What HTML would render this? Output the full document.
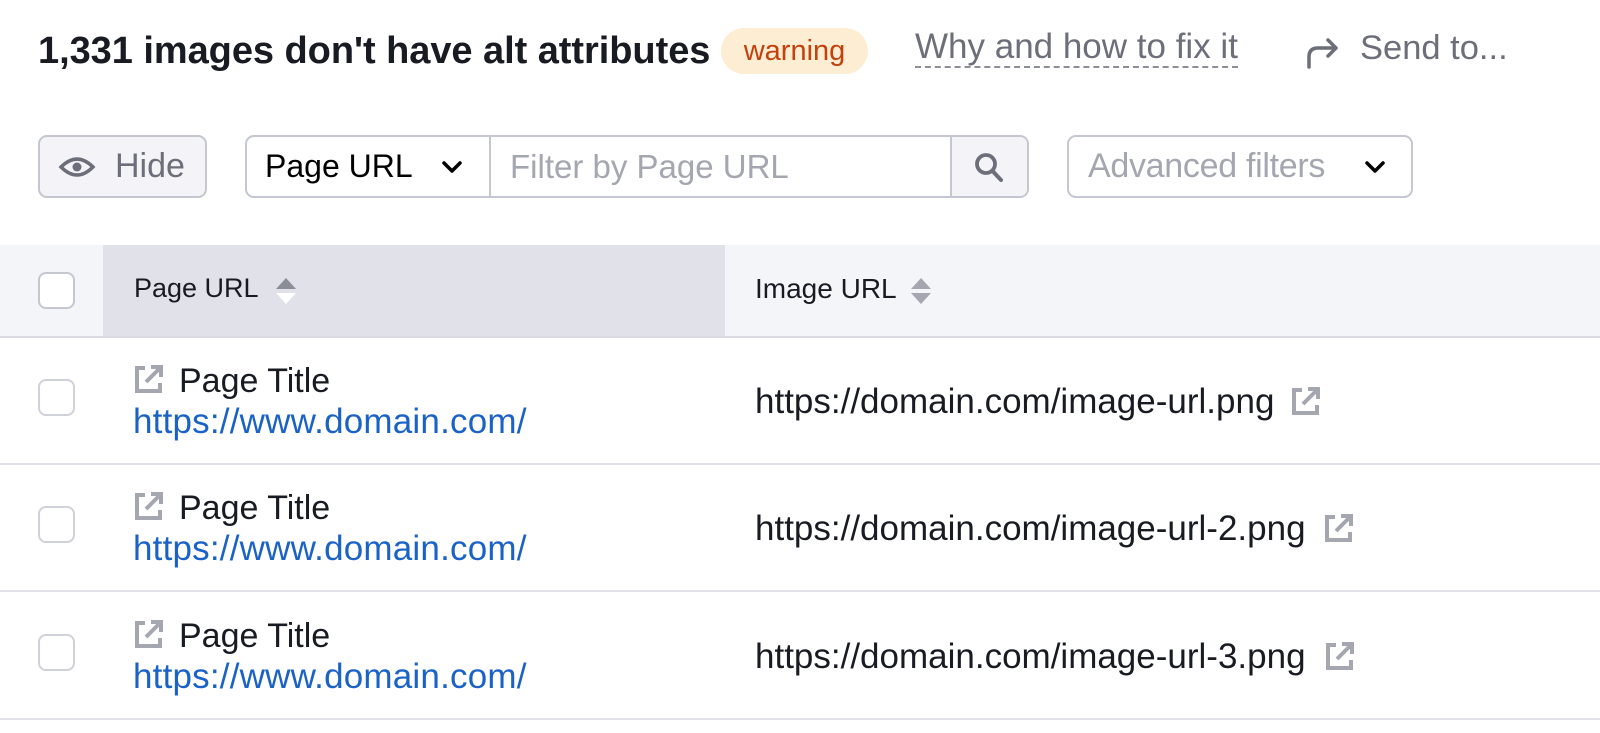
<!DOCTYPE html>
<html><head><meta charset="utf-8"><style>
*{box-sizing:border-box;margin:0;padding:0}
body{width:1600px;height:733px;background:#fff;font-family:"Liberation Sans",Arial,sans-serif;position:relative;overflow:hidden;color:#000}
.a{position:absolute;white-space:nowrap}
.btn{position:absolute;border:2px solid #c4c7cf;border-radius:9px}
.ext{position:absolute;width:34px;height:34px}
.pt{font-size:34px;color:#191b23}
.pu{font-size:35px;color:#1a62c6;letter-spacing:0.2px}
.iu{font-size:35px;color:#191b23}
</style></head><body>
<div class="a" style="left:38px;top:30px;font-size:38px;font-weight:bold;color:#191b23;letter-spacing:-0.05px">1,331 images don't have alt attributes</div>
<div class="a" style="left:721px;top:28px;width:147px;height:46px;border-radius:23px;background:#fdedd3;color:#c2410c;font-size:29px;line-height:46px;text-align:center">warning</div>
<div class="a" style="left:915px;top:28px;font-size:35px;color:#6c6e79;border-bottom:2px dashed #8b8d97;line-height:38px">Why and how to fix it</div>
<svg class="a" style="left:1303px;top:32px" width="40" height="40" viewBox="0 0 40 40"><path d="M6 35 V25 Q6 16 15 16 H33 M25 8 L33 16 L25 24" fill="none" stroke="#6c6e79" stroke-width="3.5" stroke-linecap="round" stroke-linejoin="round"/></svg>
<div class="a" style="left:1360px;top:29px;font-size:34.5px;color:#6c6e79">Send to...</div>

<div class="btn" style="left:38px;top:135px;width:169px;height:63px;background:#f4f4f8"></div>
<svg class="a" style="left:58px;top:150px" width="38" height="34" viewBox="0 0 38 34"><path d="M3 17 Q19 1 35 17 Q19 33 3 17Z" fill="none" stroke="#6c6e79" stroke-width="3.5"/><circle cx="19" cy="17" r="4.5" fill="#6c6e79"/></svg>
<div class="a" style="left:115px;top:147px;font-size:34px;color:#6c6e79">Hide</div>

<div class="btn" style="left:245px;top:135px;width:784px;height:63px"></div>
<div class="a" style="left:489px;top:137px;width:2px;height:59px;background:#c4c7cf"></div>
<div class="a" style="left:950px;top:137px;width:77px;height:59px;background:#f4f4f8;border-left:2px solid #c4c7cf;border-radius:0 7px 7px 0"></div>
<div class="a" style="left:265px;top:148px;font-size:32px;color:#000">Page URL</div>
<svg class="a" style="left:440px;top:158px" width="24" height="18" viewBox="0 0 24 18"><path d="M4 5 L12 13 L20 5" fill="none" stroke="#000" stroke-width="3.5" stroke-linecap="round" stroke-linejoin="round"/></svg>
<div class="a" style="left:510px;top:148px;font-size:33px;color:#a4a6b0">Filter by Page URL</div>
<svg class="a" style="left:972px;top:150px" width="36" height="36" viewBox="0 0 36 36"><circle cx="14" cy="14" r="9" fill="none" stroke="#6c6e79" stroke-width="3.8"/><path d="M20.5 21 L29 30" stroke="#6c6e79" stroke-width="4" stroke-linecap="round"/></svg>

<div class="btn" style="left:1067px;top:135px;width:346px;height:63px"></div>
<div class="a" style="left:1088px;top:147px;font-size:34px;color:#a4a6b0;letter-spacing:-0.3px">Advanced filters</div>
<svg class="a" style="left:1363px;top:158px" width="24" height="18" viewBox="0 0 24 18"><path d="M4 5 L12 13 L20 5" fill="none" stroke="#000" stroke-width="3.5" stroke-linecap="round" stroke-linejoin="round"/></svg>

<div class="a" style="left:0;top:245px;width:1600px;height:93px;background:#f4f5f9"></div>
<div class="a" style="left:103px;top:245px;width:622px;height:93px;background:#e0e1e9"></div>
<div class="a" style="left:0;top:336px;width:1600px;height:2px;background:#d9dae2"></div>
<div class="a" style="left:38px;top:272px;width:37px;height:37px;border:2px solid #c4c7cf;border-radius:8px;background:#fff"></div>
<div class="a" style="left:134px;top:273px;font-size:27px;color:#191b23">Page URL</div>
<svg class="a" style="left:274px;top:276px" width="24" height="30" viewBox="0 0 24 30"><path d="M2 13 L12 2 L22 13Z" fill="#8b8d97"/><path d="M2 17 L12 28 L22 17Z" fill="#fff"/></svg>
<div class="a" style="left:755px;top:273px;font-size:28px;color:#191b23">Image URL</div>
<svg class="a" style="left:909px;top:276px" width="24" height="30" viewBox="0 0 24 30"><path d="M2 13 L12 2 L22 13Z" fill="#a4a6b0"/><path d="M2 17 L12 28 L22 17Z" fill="#a4a6b0"/></svg>

<div class="a" style="left:0;top:463px;width:1600px;height:2px;background:#e0e1e9"></div>
<div class="a" style="left:0;top:590px;width:1600px;height:2px;background:#e0e1e9"></div>
<div class="a" style="left:0;top:718px;width:1600px;height:2px;background:#e0e1e9"></div>

<!-- row 1 -->
<div class="a" style="left:38px;top:379px;width:37px;height:37px;border:2px solid #d0d2d9;border-radius:8px"></div>
<svg class="ext" style="left:132px;top:362px" viewBox="0 0 34 34"><path d="M13 6 H5 V29 H28 V21" fill="none" stroke="#a4a6b0" stroke-width="4"/><path d="M14 20 L28 6 M19 5 H29 V15" fill="none" stroke="#a4a6b0" stroke-width="4"/></svg>
<div class="a pt" style="left:179px;top:362px">Page Title</div>
<div class="a pu" style="left:133px;top:402px">https://www.domain.com/</div>
<div class="a iu" style="left:755px;top:382px">https://domain.com/image-url.png</div>
<svg class="ext" style="left:1289px;top:384px" viewBox="0 0 34 34"><path d="M13 6 H5 V29 H28 V21" fill="none" stroke="#a4a6b0" stroke-width="4"/><path d="M14 20 L28 6 M19 5 H29 V15" fill="none" stroke="#a4a6b0" stroke-width="4"/></svg>

<!-- row 2 -->
<div class="a" style="left:38px;top:506px;width:37px;height:37px;border:2px solid #d0d2d9;border-radius:8px"></div>
<svg class="ext" style="left:132px;top:489px" viewBox="0 0 34 34"><path d="M13 6 H5 V29 H28 V21" fill="none" stroke="#a4a6b0" stroke-width="4"/><path d="M14 20 L28 6 M19 5 H29 V15" fill="none" stroke="#a4a6b0" stroke-width="4"/></svg>
<div class="a pt" style="left:179px;top:489px">Page Title</div>
<div class="a pu" style="left:133px;top:529px">https://www.domain.com/</div>
<div class="a iu" style="left:755px;top:509px">https://domain.com/image-url-2.png</div>
<svg class="ext" style="left:1322px;top:511px" viewBox="0 0 34 34"><path d="M13 6 H5 V29 H28 V21" fill="none" stroke="#a4a6b0" stroke-width="4"/><path d="M14 20 L28 6 M19 5 H29 V15" fill="none" stroke="#a4a6b0" stroke-width="4"/></svg>

<!-- row 3 -->
<div class="a" style="left:38px;top:634px;width:37px;height:37px;border:2px solid #d0d2d9;border-radius:8px"></div>
<svg class="ext" style="left:132px;top:617px" viewBox="0 0 34 34"><path d="M13 6 H5 V29 H28 V21" fill="none" stroke="#a4a6b0" stroke-width="4"/><path d="M14 20 L28 6 M19 5 H29 V15" fill="none" stroke="#a4a6b0" stroke-width="4"/></svg>
<div class="a pt" style="left:179px;top:617px">Page Title</div>
<div class="a pu" style="left:133px;top:657px">https://www.domain.com/</div>
<div class="a iu" style="left:755px;top:637px">https://domain.com/image-url-3.png</div>
<svg class="ext" style="left:1323px;top:639px" viewBox="0 0 34 34"><path d="M13 6 H5 V29 H28 V21" fill="none" stroke="#a4a6b0" stroke-width="4"/><path d="M14 20 L28 6 M19 5 H29 V15" fill="none" stroke="#a4a6b0" stroke-width="4"/></svg>
</body></html>
